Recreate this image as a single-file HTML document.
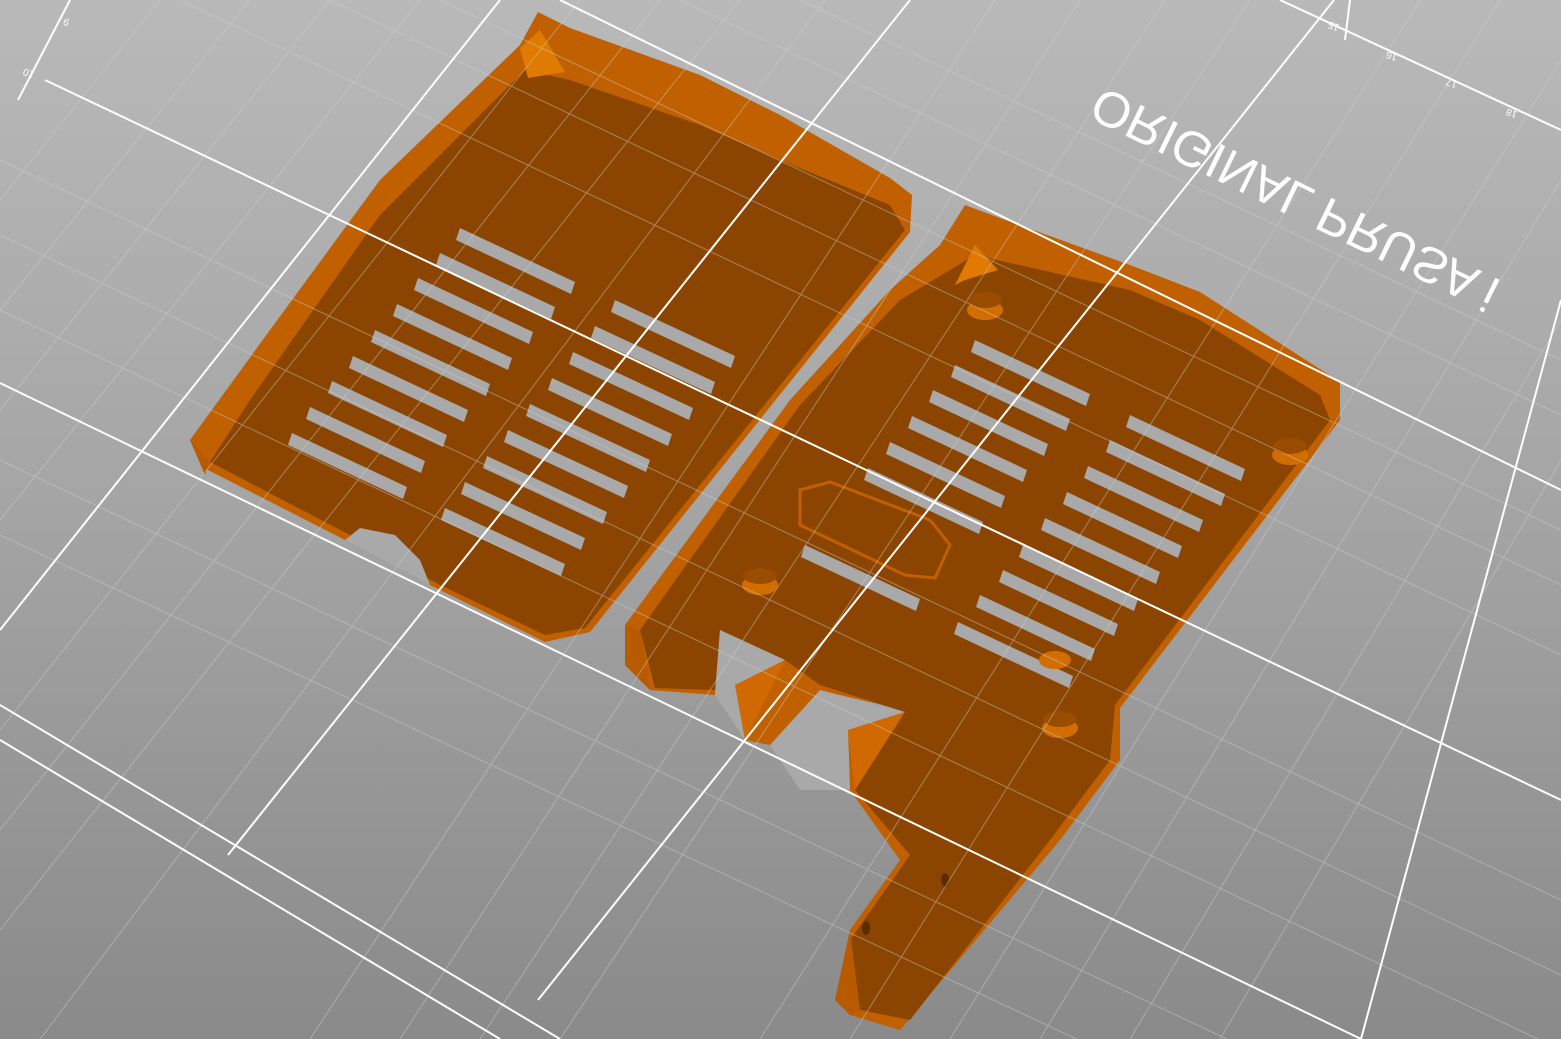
<!DOCTYPE html>
<html><head><meta charset="utf-8"><style>html,body{margin:0;padding:0;overflow:hidden}svg{display:block}</style></head>
<body>
<svg width="1561" height="1039" viewBox="0 0 1561 1039" xmlns="http://www.w3.org/2000/svg">
<defs>
<linearGradient id="bg" x1="0" y1="0" x2="0" y2="1">
<stop offset="0" stop-color="#b9b9b9"/><stop offset="0.5" stop-color="#a4a4a4"/><stop offset="1" stop-color="#8a8a8a"/>
</linearGradient>
<polygon id="barA" points="0,0 115,54 111,66 -4,12" fill="#a9a9a9"/>
<polygon id="barB" points="0,0 120,56 116,68 -4,12" fill="#a9a9a9"/>
</defs>
<rect width="1561" height="1039" fill="url(#bg)"/>

<!-- left piece -->
<polygon fill="#c06000" points="538,12 570,28 700,75 780,115 890,178 912,195 910,232 590,632 545,642 430,585 345,540 208,470 190,440 270,330 380,180 520,45"/>
<polygon fill="#8b4500" points="525,70 570,80 700,125 780,160 890,205 905,230 585,628 545,635 440,585 350,535 210,462 250,400 380,215"/>
<polygon fill="#e07a00" points="520,48 540,30 565,72 528,78"/>
<polygon fill="#b85a00" points="190,440 210,462 205,475"/>
<g>
<use href="#barA" x="460" y="228"/><use href="#barA" x="440" y="253"/><use href="#barA" x="418" y="278"/>
<use href="#barA" x="397" y="304"/><use href="#barA" x="375" y="330"/><use href="#barA" x="353" y="356"/>
<use href="#barA" x="332" y="381"/><use href="#barA" x="310" y="407"/><use href="#barA" x="292" y="433"/>
<use href="#barB" x="615" y="300"/><use href="#barB" x="595" y="326"/><use href="#barB" x="573" y="352"/>
<use href="#barB" x="552" y="378"/><use href="#barB" x="530" y="404"/><use href="#barB" x="508" y="430"/>
<use href="#barB" x="487" y="456"/><use href="#barB" x="465" y="482"/><use href="#barB" x="445" y="508"/>
</g>
<polygon fill="#a9a9a9" points="345,540 360,528 395,535 420,560 430,585"/>

<!-- right piece -->
<polygon fill="#c06000" points="965,205 1000,218 1130,265 1200,292 1340,382 1340,420 1120,708 1120,760 1060,840 900,1030 850,1015 835,1000 850,930 900,860 850,790 848,730 905,710 840,695 770,745 745,740 735,685 785,660 720,630 715,695 650,690 625,665 625,625 790,400 890,290 940,245"/>
<polygon fill="#8b4500" points="975,255 1130,290 1200,320 1320,395 1330,420 1115,705 1110,760 1050,840 910,1020 860,1010 850,940 910,855 855,790 852,735 905,712 820,685 785,660 720,630 715,690 655,688 640,630 800,405 900,300"/>
<polygon fill="#e07a00" points="955,285 975,245 998,270 965,280"/>
<polygon fill="#b85a00" points="625,625 640,630 650,690 625,665"/>
<polygon fill="#b85a00" points="850,930 860,1010 850,1015 835,1000"/>
<polygon fill="#a9a9a9" points="720,630 785,660 735,685 745,740 715,695"/>
<polygon fill="#d06a00" points="735,685 785,660 745,740"/>
<polygon fill="#a9a9a9" points="770,745 820,690 905,712 848,730 850,790 800,790"/>
<polygon fill="#d06a00" points="848,730 905,712 855,790"/>
<g>
<use href="#barA" x="975" y="340"/><use href="#barA" x="955" y="365"/><use href="#barA" x="933" y="390"/>
<use href="#barA" x="912" y="416"/><use href="#barA" x="890" y="442"/><use href="#barA" x="868" y="468"/>
<use href="#barA" x="805" y="545"/>
<use href="#barA" x="1130" y="415"/><use href="#barA" x="1110" y="440"/><use href="#barA" x="1088" y="466"/>
<use href="#barA" x="1067" y="492"/><use href="#barA" x="1045" y="518"/><use href="#barA" x="1023" y="545"/>
<use href="#barA" x="1003" y="570"/><use href="#barA" x="980" y="595"/><use href="#barA" x="958" y="622"/>
</g>
<g fill="#d26e00">
<ellipse cx="985" cy="310" rx="18" ry="10"/><ellipse cx="1290" cy="455" rx="18" ry="10"/>
<ellipse cx="760" cy="585" rx="18" ry="10"/><ellipse cx="1060" cy="728" rx="18" ry="10"/><ellipse cx="1055" cy="660" rx="16" ry="9"/>
</g>
<g fill="#9a4c00"><ellipse cx="985" cy="300" rx="17" ry="8"/><ellipse cx="1290" cy="446" rx="17" ry="8"/><ellipse cx="760" cy="576" rx="17" ry="8"/><ellipse cx="1060" cy="719" rx="17" ry="8"/></g>
<polygon fill="none" stroke="#c06000" stroke-width="3" points="800,490 830,482 930,520 950,545 935,578 905,575 800,525"/>
<g fill="#5a2c00"><ellipse cx="945" cy="880" rx="4" ry="7"/><ellipse cx="866" cy="928" rx="4" ry="7"/></g>

<!-- minor grid -->
<g stroke="#d0d0d0" stroke-width="1" opacity="0.45">
<line x1="0" y1="160" x2="1561" y2="900"/><line x1="0" y1="235" x2="1561" y2="975"/><line x1="0" y1="310" x2="1561" y2="1050"/>
<line x1="0" y1="460" x2="1250" y2="1050"/><line x1="0" y1="535" x2="1100" y2="1050"/>
<line x1="180" y1="0" x2="1561" y2="655"/><line x1="330" y1="0" x2="1561" y2="585"/><line x1="440" y1="0" x2="1561" y2="530"/>
<line x1="680" y1="0" x2="1561" y2="415"/><line x1="800" y1="0" x2="1561" y2="360"/>
<line x1="580" y1="0" x2="0" y2="730"/><line x1="660" y1="0" x2="0" y2="830"/><line x1="740" y1="0" x2="0" y2="930"/><line x1="825" y1="0" x2="40" y2="1039"/>
<line x1="995" y1="0" x2="310" y2="1039"/><line x1="1080" y1="0" x2="400" y2="1039"/><line x1="1165" y1="0" x2="480" y2="1039"/><line x1="1250" y1="0" x2="560" y2="1039"/>
<line x1="1420" y1="0" x2="760" y2="1039"/><line x1="1500" y1="0" x2="850" y2="1039"/><line x1="1561" y1="60" x2="950" y2="1039"/>
<line x1="1561" y1="180" x2="1040" y2="1039"/><line x1="1561" y1="320" x2="1130" y2="1039"/><line x1="1561" y1="460" x2="1220" y2="1039"/>
<line x1="420" y1="0" x2="0" y2="520"/><line x1="330" y1="0" x2="0" y2="410"/><line x1="250" y1="0" x2="0" y2="310"/><line x1="160" y1="0" x2="0" y2="200"/>
</g>
<!-- major grid -->
<g stroke="#ffffff" stroke-width="2" fill="none">
<line x1="45" y1="80" x2="1561" y2="800"/>
<line x1="0" y1="383" x2="1361" y2="1039"/>
<line x1="560" y1="0" x2="1561" y2="490"/>
<line x1="1280" y1="0" x2="1561" y2="130"/>
<line x1="0" y1="705" x2="560" y2="1039"/>
<line x1="0" y1="740" x2="500" y2="1039"/>
<line x1="500" y1="0" x2="0" y2="630"/>
<line x1="910" y1="0" x2="228" y2="855"/>
<line x1="1334" y1="0" x2="538" y2="1000"/>
<line x1="1561" y1="300" x2="1361" y2="1039"/>
<line x1="70" y1="0" x2="18" y2="100"/>
<line x1="1345" y1="40" x2="1350" y2="0"/>
</g>
<g fill="#ffffff" font-family="Liberation Sans, sans-serif" font-size="10">
<text transform="translate(70,20) rotate(200)">9</text>
<text transform="translate(35,72) rotate(200)">10</text>
<text transform="translate(1340,25) rotate(200)">15</text>
<text transform="translate(1398,55) rotate(200)">16</text>
<text transform="translate(1458,82) rotate(200)">17</text>
<text transform="translate(1518,112) rotate(200)">18</text>
</g>
<text transform="translate(1102,86) rotate(26) scale(1,-1)" fill="#ffffff" font-family="Liberation Sans, sans-serif" font-size="50">ORIGINAL PRUSA i</text>
</svg>
</body></html>
